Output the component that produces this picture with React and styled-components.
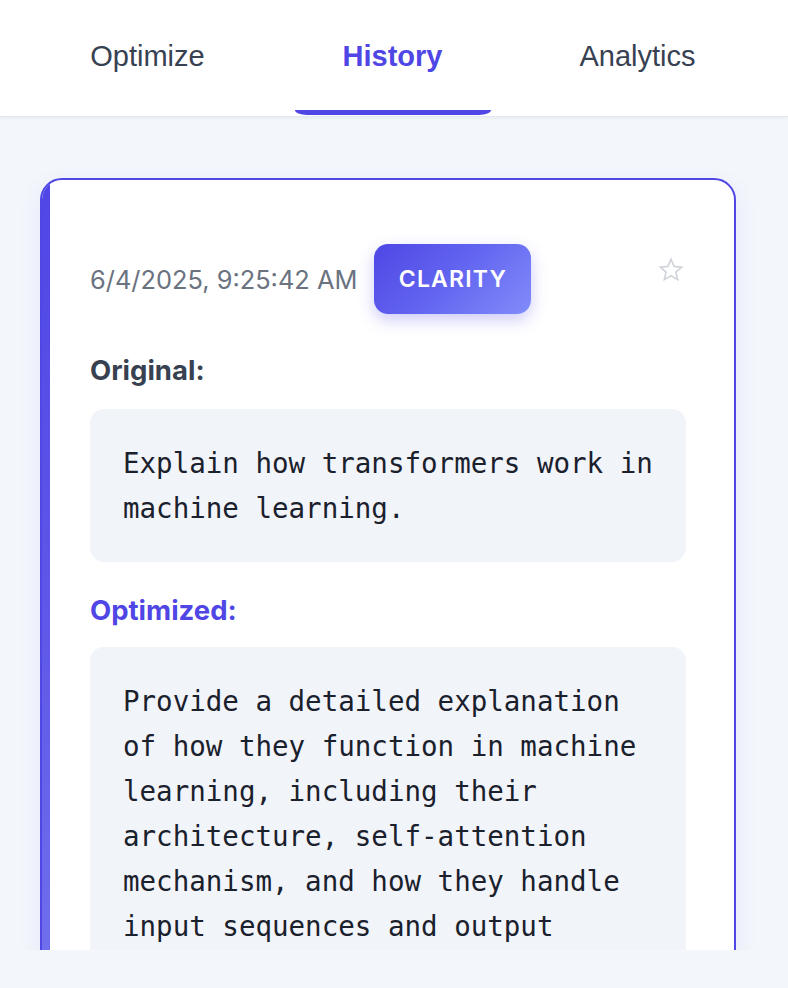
import React from "react";
import styled, { createGlobalStyle } from "styled-components";

const Global = createGlobalStyle`
  html, body { margin: 0; padding: 0; }
  body {
    background: #f3f6fb;
    font-family: Inter, "Noto Sans", sans-serif;
  }
`;

const Page = styled.div`
  height: 988px;
  display: flex;
  flex-direction: column;
  padding-bottom: 38px;
  box-sizing: border-box;
`;

const Header = styled.nav`
  height: 116px;
  flex-shrink: 0;
  background: #ffffff;
  display: flex;
  padding: 0 28px 0 25px;
  box-shadow: 0 1px 0 #e3e7ee, 0 2px 4px rgba(15, 23, 42, 0.06);
  position: relative;
  z-index: 1;
`;

const Tab = styled.button`
  flex: 1;
  position: relative;
  border: none;
  background: none;
  font-family: "Liberation Sans", Arial, sans-serif;
  font-size: 29px;
  font-weight: ${(p) => (p.$active ? 700 : 400)};
  color: ${(p) => (p.$active ? "#4f46e5" : "#374151")};
  display: flex;
  justify-content: center;
  padding: 40px 0 0;
  cursor: pointer;

  &::after {
    content: "";
    display: ${(p) => (p.$active ? "block" : "none")};
    position: absolute;
    left: 50%;
    bottom: 1px;
    width: 196px;
    margin-left: -98px;
    height: 5px;
    background: #4f46e5;
    border-radius: 0 0 12px 12px / 0 0 5px 5px;
  }
`;

const Main = styled.main`
  flex: 1;
  overflow: hidden;
  padding: 62px 52px 0 40px;
`;

const Card = styled.article`
  position: relative;
  background: #ffffff;
  border: 2px solid #4f46e5;
  border-radius: 22px;
  padding: 64px 48px 48px 48px;
  overflow: hidden;
  box-shadow: 0 8px 24px rgba(79, 70, 229, 0.08);

  &::before {
    content: "";
    position: absolute;
    left: 0;
    top: 0;
    bottom: 0;
    width: 8px;
    background: linear-gradient(180deg, #4f46e5 0%, #5f58e8 50%, #7577ee 100%);
  }
`;

const MetaRow = styled.div`
  display: flex;
  align-items: center;
  height: 70px;
`;

const Timestamp = styled.span`
  font-size: 25.4px;
  color: #6b7280;
`;

const Badge = styled.span`
  margin-left: 17px;
  height: 70px;
  width: 157px;
  box-sizing: border-box;
  display: inline-flex;
  align-items: center;
  justify-content: center;
  border-radius: 14px;
  background: linear-gradient(135deg, #4f46e5 0%, #6366f1 50%, #818cf8 100%);
  color: #ffffff;
  font-size: 23px;
  font-weight: 600;
  letter-spacing: 1.2px;
  text-transform: uppercase;
  box-shadow: 0 6px 16px rgba(79, 70, 229, 0.28);
`;

const StarButton = styled.button`
  margin-left: auto;
  align-self: flex-start;
  margin-top: 13px;
  margin-right: 2px;
  border: none;
  background: none;
  padding: 0;
  width: 26px;
  height: 26px;
  display: flex;
  cursor: pointer;
`;

const Label = styled.h3`
  margin: ${(p) => (p.$accent ? "30px 0 19px" : "38px 0 21px")};
  font-size: 27.5px;
  line-height: 36px;
  font-weight: 700;
  color: ${(p) => (p.$accent ? "#4f46e5" : "#374151")};
`;

const Code = styled.pre`
  margin: 0;
  background: #f1f4f9;
  border-radius: 14px;
  padding: 32px 32px 31px 33px;
  font-family: "DejaVu Sans Mono", "Liberation Mono", monospace;
  font-size: 27.5px;
  line-height: 45px;
  color: #1a202c;
  white-space: pre-wrap;
  word-break: normal;
`;

const Star = () => (
  <svg width="26" height="26" viewBox="0 0 24 24" fill="none">
    <polygon
      points="12,2.2 14.9,8.6 21.8,9.3 16.6,14 18.1,20.9 12,17.4 5.9,20.9 7.4,14 2.2,9.3 9.1,8.6"
      stroke="#d1d5db"
      strokeWidth="1.6"
      strokeLinejoin="miter"
    />
  </svg>
);

export default function App() {
  return (
    <>
      <Global />
      <Page>
        <Header>
          <Tab>Optimize</Tab>
          <Tab $active>History</Tab>
          <Tab>Analytics</Tab>
        </Header>
        <Main>
          <Card>
            <MetaRow>
              <Timestamp>6/4/2025, 9:25:42 AM</Timestamp>
              <Badge>Clarity</Badge>
              <StarButton aria-label="Favorite">
                <Star />
              </StarButton>
            </MetaRow>
            <Label>Original:</Label>
            <Code>Explain how transformers work in machine learning.</Code>
            <Label $accent>Optimized:</Label>
            <Code>
              Provide a detailed explanation of how they function in machine learning, including their architecture, self-attention mechanism, and how they handle input sequences and output sequences.
            </Code>
          </Card>
        </Main>
      </Page>
    </>
  );
}
